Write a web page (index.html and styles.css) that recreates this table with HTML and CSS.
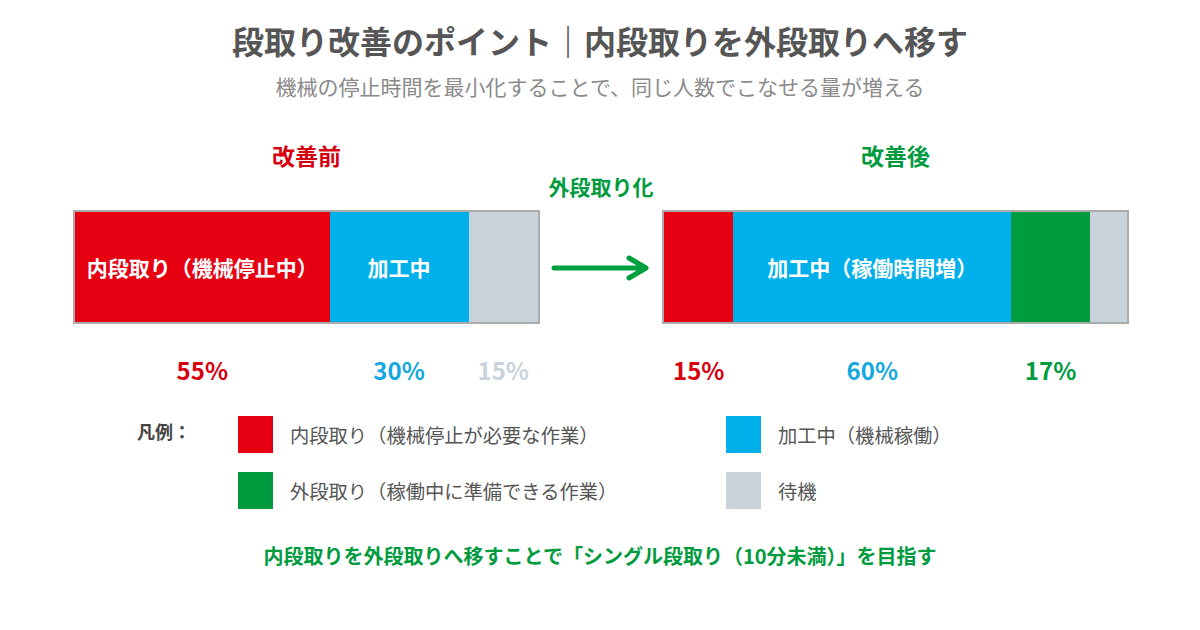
FILE: index.html
```html
<!DOCTYPE html>
<html lang="ja">
<head>
<meta charset="utf-8">
<link rel="stylesheet" href="styles.css">
</head>
<body>
<div class="page">
  <header class="head">
    <h1 class="title">段取り改善のポイント｜内段取りを外段取りへ移す</h1>
    <p class="subtitle">機械の停止時間を最小化することで、同じ人数でこなせる量が増える</p>
  </header>

  <section class="chart">
    <div class="col">
      <div class="col-title red-t">改善前</div>
      <div class="bar">
        <div class="seg red" style="width:55%">内段取り（機械停止中）</div>
        <div class="seg blue" style="width:30%">加工中</div>
        <div class="seg gray" style="width:15%"></div>
      </div>
      <div class="pcts">
        <div class="pct red-t" style="width:55%">55%</div>
        <div class="pct blue-t" style="width:30%">30%</div>
        <div class="pct gray-t" style="width:15%">15%</div>
      </div>
    </div>

    <div class="mid">
      <div class="mid-label">外段取り化</div>
      <svg class="arrow" width="100" height="30" viewBox="0 0 100 30">
        <path d="M3 15 H94 M78 5 L95 15 L78 25" fill="none" stroke="#00a040" stroke-width="5" stroke-linecap="round" stroke-linejoin="round"/>
      </svg>
    </div>

    <div class="col">
      <div class="col-title green-t">改善後</div>
      <div class="bar">
        <div class="seg red" style="width:15%"></div>
        <div class="seg blue" style="width:60%">加工中（稼働時間増）</div>
        <div class="seg green" style="width:17%"></div>
        <div class="seg gray" style="width:8%"></div>
      </div>
      <div class="pcts">
        <div class="pct red-t" style="width:15%">15%</div>
        <div class="pct blue-t" style="width:60%">60%</div>
        <div class="pct green-t" style="width:17%">17%</div>
        <div class="pct" style="width:8%"></div>
      </div>
    </div>
  </section>

  <section class="legend">
    <div class="legend-label">凡例：</div>
    <div class="legend-grid">
      <div class="item"><span class="sw red"></span><span class="item-text">内段取り（機械停止が必要な作業）</span></div>
      <div class="item"><span class="sw blue"></span><span class="item-text">加工中（機械稼働）</span></div>
      <div class="item"><span class="sw green"></span><span class="item-text">外段取り（稼働中に準備できる作業）</span></div>
      <div class="item"><span class="sw gray"></span><span class="item-text">待機</span></div>
    </div>
  </section>

  <p class="message">内段取りを外段取りへ移すことで「シングル段取り（10分未満）」を目指す</p>
</div>
</body>
</html>
```

FILE: styles.css
```css
* { box-sizing: border-box; }
html, body { margin: 0; padding: 0; background: #fff; }
body {
  font-family: "Noto Sans CJK JP", "Noto Sans", sans-serif;
  width: 1200px;
  height: 630px;
  overflow: hidden;
}
.page { width: 1200px; height: 630px; }

.head { text-align: center; padding-top: 20px; }
.title {
  margin: 0;
  font-size: 32px;
  line-height: 40px;
  font-weight: 700;
  color: #555;
}
.subtitle {
  margin: 12px 0 0;
  font-size: 21px;
  line-height: 28px;
  color: #8a8a8a;
}

.chart {
  display: flex;
  align-items: flex-start;
  margin-top: 41px;
  padding-left: 73px;
}
.col { width: 467px; }
.col-title {
  text-align: center;
  font-size: 23px;
  line-height: 28px;
  font-weight: 700;
}
.red-t { color: #d7000f; }
.green-t { color: #009b3e; }
.blue-t { color: #13a8e0; }
.gray-t { color: #c9d3dc; }

.bar {
  display: flex;
  margin-top: 41px;
  height: 114px;
  border: 2px solid #ababab;
}
.seg {
  display: flex;
  align-items: center;
  justify-content: center;
  color: #fff;
  font-size: 21px;
  font-weight: 700;
  white-space: nowrap;
}
.red { background: #e60012; }
.blue { background: #00b0ea; }
.green { background: #009b3e; }
.gray { background: #c9d3dc; }

.pcts { display: flex; margin-top: 32px; padding: 0 2px; }
.pct {
  text-align: center;
  font-size: 24px;
  line-height: 28px;
  font-weight: 700;
}

.mid {
  width: 122px;
  display: flex;
  flex-direction: column;
  align-items: center;
}
.mid-label {
  margin-top: 31px;
  font-size: 21px;
  line-height: 28px;
  font-weight: 700;
  color: #009b3e;
}
.arrow { margin-top: 53px; }

.legend {
  display: flex;
  align-items: flex-start;
  margin-top: 32px;
  padding-left: 137px;
}
.legend-label {
  width: 101px;
  font-size: 18px;
  line-height: 28px;
  font-weight: 700;
  color: #444;
  margin-top: 1px;
}
.legend-grid {
  display: grid;
  grid-template-columns: 488px 300px;
  row-gap: 19px;
}
.item { display: flex; align-items: center; gap: 17px; }
.sw { width: 35px; height: 37px; display: block; }
.item-text {
  font-size: 19.3px;
  line-height: 28px;
  color: #555;
}

.message {
  margin: 33px 0 0;
  text-align: center;
  font-size: 20px;
  line-height: 28px;
  font-weight: 700;
  color: #009b3e;
}
```
